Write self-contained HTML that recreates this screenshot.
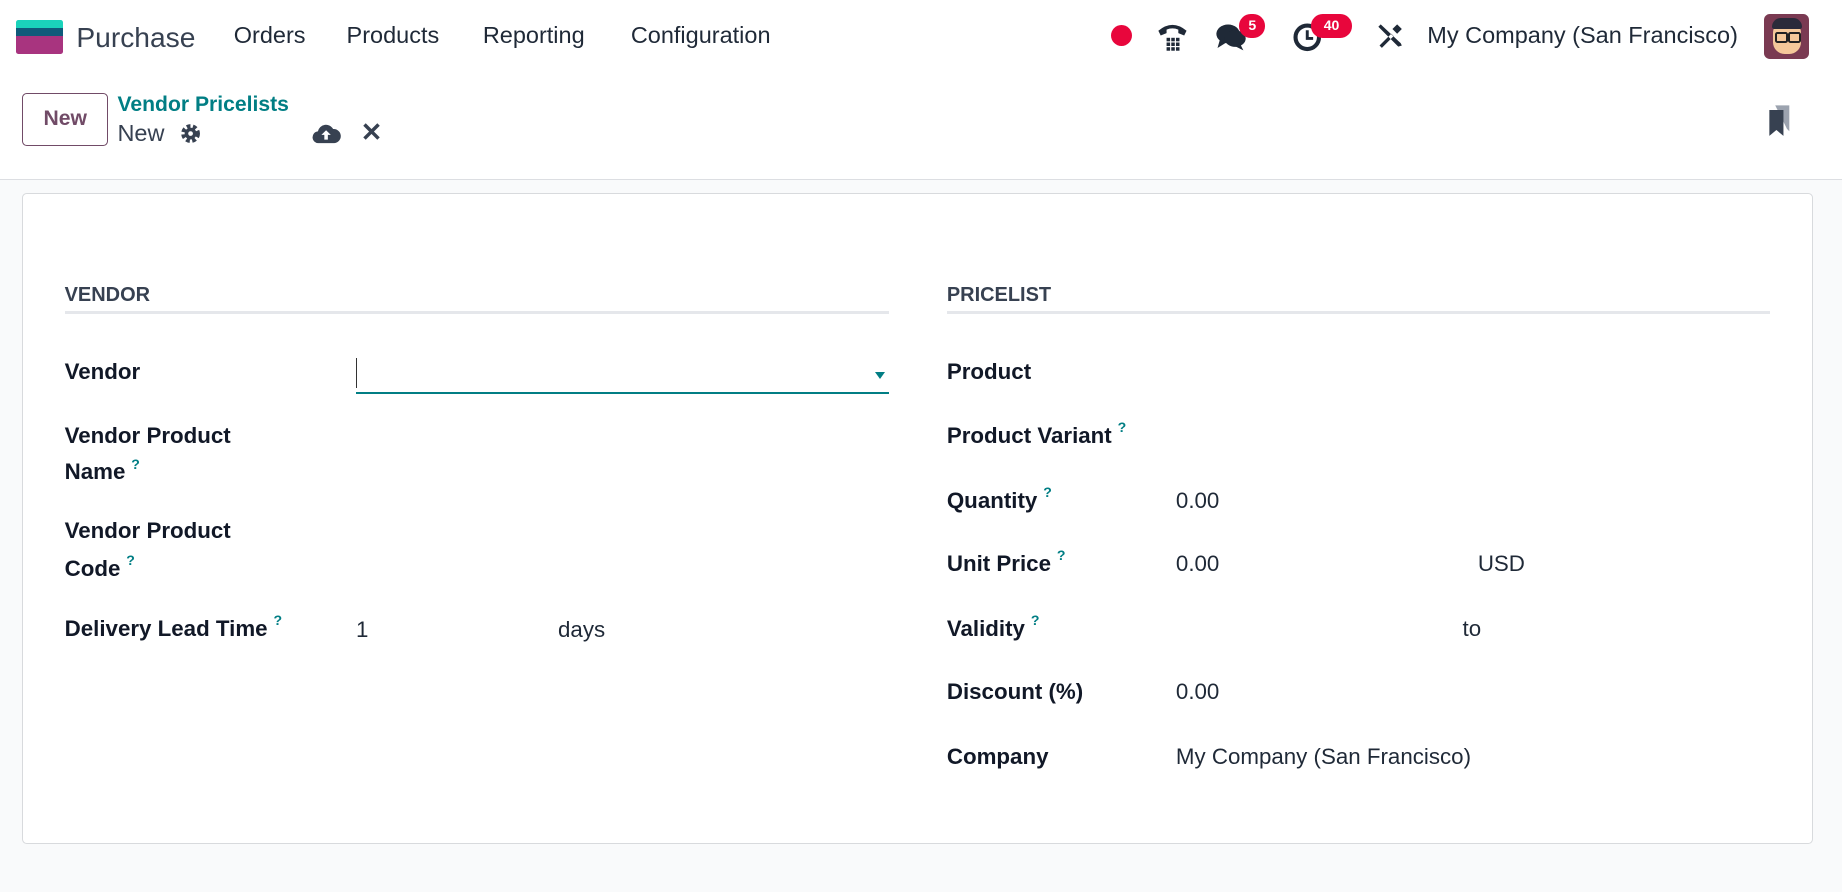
<!DOCTYPE html>
<html><head><meta charset="utf-8"><style>
html{zoom:1.17474}
body{margin:0;width:1568px;height:759px;background:#f9fafb;font-family:"Liberation Sans",sans-serif;color:#1f2937;position:relative;overflow:hidden}
.a{position:absolute;white-space:nowrap;line-height:22px}
.hdr{position:absolute;left:0;top:0;width:1568px;height:152px;background:#fff;border-bottom:1px solid #dcdee2}
.nav{font-size:20px;color:#1f2937}
.card{position:absolute;left:19px;top:164px;width:1523px;height:553px;background:#fff;border:1px solid #d8dadd;border-radius:4px}
.h{font-weight:bold;font-size:17px;color:#374151}
.line{position:absolute;height:2px;background:#e5e7eb}
.l{font-weight:bold;font-size:19px;color:#111827}
.v{font-size:19px;color:#1f2937}
.q{color:#017e84;font-size:12px;font-weight:bold;margin-left:5px;position:relative;top:-9px;line-height:0}
.badge{position:absolute;background:#e8063c;color:#fff;font-size:12px;font-weight:bold;border-radius:10px;height:20px;line-height:20px;text-align:center}
</style></head><body>
<div class="hdr"></div>
<div style="position:absolute;left:14px;top:17px;width:40px;height:29px;border-radius:2px;overflow:hidden">
<div style="height:7px;background:#1ad3bb"></div><div style="height:7px;background:#0f5a7a"></div><div style="height:15px;background:#a8347f"></div></div>
<div class="a" style="left:65px;top:19px;font-size:24px;line-height:26px;color:#374151">Purchase</div>
<div class="a nav" style="left:199px;top:20px">Orders</div>
<div class="a nav" style="left:295px;top:20px">Products</div>
<div class="a nav" style="left:411px;top:20px">Reporting</div>
<div class="a nav" style="left:537px;top:20px">Configuration</div>
<div style="position:absolute;left:946px;top:21px;width:18px;height:18px;border-radius:50%;background:#e8063c"></div>
<svg style="position:absolute;left:984px;top:16px" width="28" height="28" viewBox="0 0 28 28"><path d="M2 10 Q14 0 26 10 L24 14 L19 12 L19 9 Q14 7 9 9 L9 12 L4 14Z" fill="#1f2937"/><g fill="#1f2937"><rect x="9" y="16" width="3" height="3"/><rect x="13" y="16" width="3" height="3"/><rect x="17" y="16" width="3" height="3"/><rect x="9" y="20" width="3" height="3"/><rect x="13" y="20" width="3" height="3"/><rect x="17" y="20" width="3" height="3"/><rect x="9" y="24" width="3" height="3"/><rect x="13" y="24" width="3" height="3"/><rect x="17" y="24" width="3" height="3"/></g></svg>
<svg style="position:absolute;left:1033px;top:18px" width="30" height="26" viewBox="0 0 30 26"><ellipse cx="12" cy="11" rx="10" ry="8" fill="#1f2937"/><path d="M5 16 L3 23 L11 18Z" fill="#1f2937"/><ellipse cx="18" cy="15" rx="9" ry="7" fill="#1f2937"/><path d="M22 19 L25 25 L17 21Z" fill="#1f2937"/></svg>
<div class="badge" style="left:1055px;top:12px;width:22px">5</div>
<svg style="position:absolute;left:1100px;top:19px" width="26" height="26" viewBox="0 0 26 26"><circle cx="13" cy="13" r="10" fill="none" stroke="#1f2937" stroke-width="3.5"/><path d="M13 7 V14 H18" fill="none" stroke="#1f2937" stroke-width="2.5"/></svg>
<div class="badge" style="left:1116px;top:12px;width:35px">40</div>
<svg style="position:absolute;left:1171px;top:19px" width="24" height="24" viewBox="0 0 24 24"><path d="M4 2 L2 4 L19 21 L22 20 L21 18Z M3 20 L13 10 L15 12 L5 22Z M14 6 L18 2 L22 6 L18 10Z" fill="#1f2937"/></svg>
<div class="a nav" style="left:1215px;top:20px">My Company (San Francisco)</div>
<div style="position:absolute;left:1502px;top:12px;width:38px;height:38px;border-radius:5px;background:#7a3a52;overflow:hidden">
<div style="position:absolute;left:7px;top:6px;width:24px;height:28px;border-radius:10px;background:#f5c89a"></div>
<div style="position:absolute;left:6px;top:3px;width:26px;height:10px;border-radius:8px 8px 2px 2px;background:#2a2a3a"></div>
<div style="position:absolute;left:9px;top:15px;width:8px;height:6px;border:2px solid #222;border-radius:2px"></div>
<div style="position:absolute;left:20px;top:15px;width:8px;height:6px;border:2px solid #222;border-radius:2px"></div>
</div>
<div style="position:absolute;left:19px;top:79px;width:73px;height:45px;border:1px solid #714b67;border-radius:4px;box-sizing:border-box;color:#714b67;font-size:18px;line-height:43px;text-align:center;font-weight:bold">New</div>
<div class="a" style="left:100px;top:78px;font-size:18px;font-weight:bold;color:#017e84">Vendor Pricelists</div>
<div class="a" style="left:100px;top:103px;font-size:20px;color:#374151">New</div>
<svg style="position:absolute;left:153px;top:105px" width="18" height="18" viewBox="0 0 18 18"><circle cx="9" cy="9" r="6" fill="none" stroke="#374151" stroke-width="4" stroke-dasharray="3 2"/><circle cx="9" cy="9" r="5" fill="#374151"/><circle cx="9" cy="9" r="2" fill="#fff"/></svg>
<svg style="position:absolute;left:266px;top:104px" width="24" height="20" viewBox="0 0 24 20"><path d="M6 18 A5 5 0 0 1 5 8 A7 7 0 0 1 18 6 A6 6 0 0 1 19 18Z" fill="#374151"/><path d="M12 7 L16 11 H13.5 V15 H10.5 V11 H8Z" fill="#fff"/></svg>
<div class="a" style="left:307px;top:103px;font-size:22px;font-weight:bold;color:#374151">✕</div>
<svg style="position:absolute;left:1504px;top:88px" width="22" height="30" viewBox="0 0 22 30"><path d="M7 2 H19 V24 L17 22 Z" fill="#9ca3af"/><path d="M2 6 H14 V28 L8 23 L2 28Z" fill="#374151"/></svg>
<div class="card"></div>
<div class="a h" style="left:55px;top:241px">VENDOR</div>
<div class="line" style="left:55px;top:265px;width:702px"></div>
<div class="a h" style="left:806px;top:241px">PRICELIST</div>
<div class="line" style="left:806px;top:265px;width:701px"></div>

<div class="a l" style="left:55px;top:306px">Vendor</div>
<div style="position:absolute;left:303px;top:305px;width:1px;height:25px;background:#333"></div>
<div style="position:absolute;left:303px;top:334px;width:454px;height:1px;background:#017e84"></div>
<div style="position:absolute;left:745px;top:317px;border-left:5px solid transparent;border-right:5px solid transparent;border-top:6px solid #017e84"></div>
<div class="a l" style="left:55px;top:360px">Vendor Product</div>
<div class="a l" style="left:55px;top:391px">Name<span class="q">?</span></div>
<div class="a l" style="left:55px;top:441px">Vendor Product</div>
<div class="a l" style="left:55px;top:473px">Code<span class="q">?</span></div>
<div class="a l" style="left:55px;top:524px">Delivery Lead Time<span class="q">?</span></div>
<div class="a v" style="left:303px;top:525px">1</div>
<div class="a v" style="left:475px;top:525px">days</div>

<div class="a l" style="left:806px;top:306px">Product</div>
<div class="a l" style="left:806px;top:360px">Product Variant<span class="q">?</span></div>
<div class="a l" style="left:806px;top:415px">Quantity<span class="q">?</span></div>
<div class="a v" style="left:1001px;top:415px">0.00</div>
<div class="a l" style="left:806px;top:469px">Unit Price<span class="q">?</span></div>
<div class="a v" style="left:1001px;top:469px">0.00</div>
<div class="a v" style="left:1258px;top:469px">USD</div>
<div class="a l" style="left:806px;top:524px">Validity<span class="q">?</span></div>
<div class="a v" style="left:1245px;top:524px">to</div>
<div class="a l" style="left:806px;top:578px">Discount (%)</div>
<div class="a v" style="left:1001px;top:578px">0.00</div>
<div class="a l" style="left:806px;top:633px">Company</div>
<div class="a v" style="left:1001px;top:633px">My Company (San Francisco)</div>
</body></html>
